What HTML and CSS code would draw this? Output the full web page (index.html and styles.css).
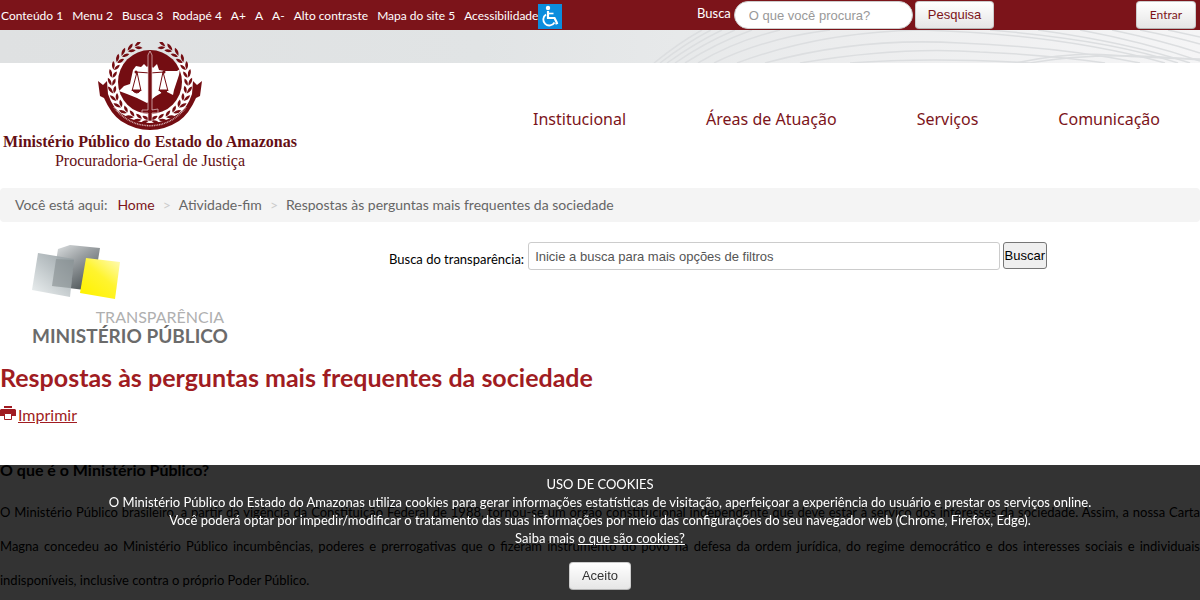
FILE: index.html
```html
<!DOCTYPE html>
<html lang="pt-br">
<head>
  <meta charset="UTF-8" />
  <meta name="viewport" content="width=device-width, initial-scale=1.0" />
  <title>Respostas às perguntas mais frequentes da sociedade</title>
  <link rel="stylesheet" href="styles.css">
</head>
<body>
  <div class="topbar">
    <nav class="access-links">
      <a href="#content">Conteúdo 1</a>
      <a href="#menu">Menu 2</a>
      <a href="#busca">Busca 3</a>
      <a href="#rodape">Rodapé 4</a>
      <a href="#">A+</a>
      <a href="#">A</a>
      <a href="#">A-</a>
      <a href="#">Alto contraste</a>
      <a href="#">Mapa do site 5</a>
      <a href="#" class="access-page">Acessibilidade<svg class="wheelchair" viewBox="0 0 24 25" aria-hidden="true">
        <rect width="24" height="25" fill="#0c8ddd"/>
        <circle cx="10" cy="4" r="2.2" fill="#fff"/>
        <path d="M10 7v7h6.500l2.500 5" fill="none" stroke="#fff" stroke-width="2.200"/>
        <path d="M10 9.500h5.500" stroke="#fff" stroke-width="1.600"/>
        <path d="M8 10.500a6 6 0 1 0 8.500 8" fill="none" stroke="#fff" stroke-width="1.800"/>
        <path d="M17.500 20l2.500-1" stroke="#fff" stroke-width="1.500"/>
      </svg></a>
    </nav>
    <form class="site-search">
      <label for="busca">Busca</label>
      <input type="text" id="busca" placeholder="O que você procura?">
      <button type="button" class="btn btn-red">Pesquisa</button>
    </form>
    <button type="button" class="btn btn-red btn-login">Entrar</button>
  </div>

  <header class="header">
    <svg class="band" viewBox="0 0 1200 33" preserveAspectRatio="none" aria-hidden="true">
      <defs>
        <linearGradient id="bandFill">
          <stop offset="0" stop-color="#dfe1e2"/>
          <stop offset="0.400" stop-color="#e1e4e5"/>
          <stop offset="0.700" stop-color="#ecedee"/>
          <stop offset="1" stop-color="#f5f5f6"/>
        </linearGradient>
      </defs>
      <rect width="1200" height="33" fill="url(#bandFill)"/>
      <g fill="none" stroke="#dcdee0" stroke-width="1.500">
        <path d="M654 33Q680 12 702 0"/>
        <path d="M660 33Q686 13 711 0"/>
        <path d="M667 33Q695 13 722 0"/>
        <path d="M675 33Q704 13 735 0"/>
        <path d="M685 33Q716 13 752 0"/>
        <path d="M698 33Q735 11 780 0"/>
        <path d="M714 33Q765 8 830 0"/>
        <path d="M737 33Q820 2 920 0Q1060 4 1165 33"/>
        <path d="M765 33Q860 7 960 13Q1060 17 1140 33"/>
        <path d="M800 33Q900 16 980 22Q1050 25 1105 33"/>
        <path d="M850 33Q930 27 1030 33"/>
        <path d="M990 0Q1110 10 1178 33"/>
        <path d="M1038 0Q1130 13 1190 33"/>
        <path d="M1080 0Q1145 12 1200 31"/>
        <path d="M1112 0Q1160 10 1200 23"/>
        <path d="M1140 0Q1175 7 1200 14"/>
        <path d="M1168 0L1200 7"/>
        <path d="M1015 33Q1070 22 1110 25T1200 29"/>
        <path d="M1030 33Q1100 20 1200 30"/>
      </g>
    </svg>
    <a href="#" class="brand">
      <svg class="emblem" viewBox="-54 -40 108 90" aria-hidden="true">
        <defs>
          <g id="leaf">
            <path d="M3-38.500Q0-43-5-42Q-3-38 3-38.500z"/>
            <path d="M3-37.800Q-2-38.500-4-34.500Q1-33.500 3-37.800z"/>
          </g>
          <g id="branch">
            <use href="#leaf" transform="rotate(19)"/>
            <use href="#leaf" transform="rotate(31)"/>
            <use href="#leaf" transform="rotate(43)"/>
            <use href="#leaf" transform="rotate(55)"/>
            <use href="#leaf" transform="rotate(67)"/>
            <use href="#leaf" transform="rotate(79)"/>
            <use href="#leaf" transform="rotate(91)"/>
            <use href="#leaf" transform="rotate(103)"/>
            <use href="#leaf" transform="rotate(115)"/>
            <use href="#leaf" transform="rotate(127)"/>
            <use href="#leaf" transform="rotate(139)"/>
            <use href="#leaf" transform="rotate(151)"/>
            <use href="#leaf" transform="rotate(163)"/>
            <use href="#leaf" transform="rotate(174)"/>
          </g>
        </defs>
        <g fill="#740d12">
          <path d="M-52-1L-47 3L-43-1L-42 12Q-37 27-28 32Q-14 41 0 41Q14 41 28 32Q37 27 42 12L43-1L47 3L52-1L50 14L46 16Q39 32 29 39Q15 48 0 48Q-15 48-29 39Q-39 32-46 16L-50 14z"/>
          <use href="#branch"/>
          <use href="#branch" transform="scale(-1 1)"/>
          <circle r="32"/>
        </g>
        <path d="M-36 25A44 44 0 0 0 36 25" fill="none" stroke="#d9b0b2" stroke-width="1.500" stroke-dasharray="1 .7"/>
        <path d="M-31 9L-26 4L-20 2L-17-12L-14-16L-9-15L-6-18L-3-15L0-18L3-14L7-18L9-12L15-11H27L30-13L29-7L24 8L23 13L15 9L6 14L-3 21L-13 16L-23 12z" fill="#fff"/>
        <g fill="none" stroke="#740d12" stroke-width="1">
          <path d="M-14-10Q0-8 14-10M-13-10L-18 9M-13-10L-9 9M13-10L9 9M13-10L18 9"/>
          <path d="M-18 8H-9Q-13 14-18 8zM9 8H18Q13 14 9 8z" fill="#740d12"/>
        </g>
        <circle cx="-14" cy="-10" r="1.500" fill="#740d12"/>
        <circle cx="14" cy="-10" r="1.500" fill="#740d12"/>
        <path d="M0-31L2-27V28L8 27V31L2 31V39H-2V31H-8V28H-2V-27z" fill="#740d12" stroke="#e8d0d1" stroke-width=".7"/>
      </svg>
      <span class="brand-name">Ministério Público do Estado do Amazonas</span>
      <span class="brand-sub">Procuradoria-Geral de Justiça</span>
    </a>
    <nav class="main-menu" id="menu">
      <a href="#">Institucional</a>
      <a href="#">Áreas de Atuação</a>
      <a href="#">Serviços</a>
      <a href="#">Comunicação</a>
    </nav>
  </header>

  <ul class="breadcrumb">
    <li>Você está aqui:</li>
    <li><a href="#">Home</a></li>
    <li class="divider">&gt;</li>
    <li>Atividade-fim</li>
    <li class="divider">&gt;</li>
    <li>Respostas às perguntas mais frequentes da sociedade</li>
  </ul>

  <div class="transparency">
    <a href="#" class="transparency-logo">
      <svg class="squares" viewBox="0 0 90 58" aria-hidden="true">
        <defs>
          <linearGradient id="dark" x1="0" y1="0" x2="0.700" y2="1">
            <stop offset="0" stop-color="#e3e6e7"/>
            <stop offset="0.450" stop-color="#9a9fa2"/>
            <stop offset="1" stop-color="#4b5356"/>
          </linearGradient>
          <linearGradient id="light" x1="1" y1="0" x2="0.200" y2="1">
            <stop offset="0" stop-color="#8d979b"/>
            <stop offset="0.500" stop-color="#b6bec1"/>
            <stop offset="1" stop-color="#e3e8e9"/>
          </linearGradient>
          <linearGradient id="yellow" x1="0.200" y1="1" x2="1" y2="0">
            <stop offset="0" stop-color="#fff200"/>
            <stop offset="0.500" stop-color="#fff42f"/>
            <stop offset="1" stop-color="#fffbc0"/>
          </linearGradient>
        </defs>
        <path d="M38 0L68 3L61 46L20 41L26 4z" fill="url(#dark)"/>
        <path d="M6 8L42 14L38 52L0 45z" fill="url(#light)" opacity="0.900"/>
        <path d="M24 14L42 15L39 43L20 41z" fill="#81898c" opacity="0.500"/>
        <path d="M54 13L88 17L83 54L48 48z" fill="url(#yellow)"/>
      </svg>
      <span class="transparency-word">TRANSPARÊNCIA</span>
      <span class="transparency-org">MINISTÉRIO PÚBLICO</span>
    </a>
    <form class="transparency-search">
      <label for="filtro">Busca do transparência:</label>
      <input type="text" id="filtro" placeholder="Inicie a busca para mais opções de filtros">
      <button type="button" class="btn-plain">Buscar</button>
    </form>
  </div>

  <main class="content" id="content">
    <h1>Respostas às perguntas mais frequentes da sociedade</h1>
    <a href="#" class="print">
      <svg class="printer" viewBox="0 0 16 16" aria-hidden="true">
        <path d="M4 1h8v2H4zM1 4h14l1 1v6h-3V9H3v2H0V5z" fill="#a01c22"/>
        <path d="M3 8h10v3H3z" fill="#a01c22"/>
        <path d="M4.500 8.500h7v6h-7z" fill="#fff" stroke="#a01c22"/>
      </svg><span>Imprimir</span>
    </a>
    <h2>O que é o Ministério Público?</h2>
    <p>O Ministério Público brasileiro, a partir da vigência da Constituição Federal de 1988, tornou-se um órgão constitucional independente que deve estar à serviço dos interesses da sociedade. Assim, a nossa Carta Magna concedeu ao Ministério Público incumbências, poderes e prerrogativas que o fizeram instrumento do povo na defesa da ordem jurídica, do regime democrático e dos interesses sociais e individuais indisponíveis, inclusive contra o próprio Poder Público.</p>
  </main>

  <div class="cookies">
    <div>USO DE COOKIES</div>
    <div>O Ministério Público do Estado do Amazonas utiliza cookies para gerar informações estatísticas de visitação, aperfeiçoar a experiência do usuário e prestar os serviços online.</div>
    <div>Você poderá optar por impedir/modificar o tratamento das suas informações por meio das configurações do seu navegador web (Chrome, Firefox, Edge).</div>
    <div>Saiba mais <a href="#">o que são cookies?</a></div>
    <button type="button" class="btn">Aceito</button>
  </div>
</body>
</html>
```
FILE: styles.css
```css
* {
  box-sizing: border-box;
}
body {
  margin: 0;
  font-family: Lato, sans-serif;
  font-size: 13px;
  line-height: 18px;
  color: #000;
  background: #fff;
}
a {
  color: #7c141a;
  text-decoration: none;
}
input, button {
  font-family: "Liberation Sans", Arial, sans-serif;
  font-size: 13px;
  line-height: 18px;
}

/* top bar */
.topbar {
  display: grid;
  grid-template-columns: 697px 1fr auto;
  height: 30px;
  padding-right: 4px;
  background: #7c141a;
  color: #fff;
}
.access-links {
  display: flex;
  align-items: center;
  gap: 9px;
  padding: 2px 0 0 1px;
  font-size: 12px;
}
.access-links a {
  color: #fff;
  white-space: nowrap;
}
.access-links .access-page {
  display: flex;
  align-items: center;
}
.wheelchair {
  width: 24px;
  height: 25px;
}
.site-search {
  display: flex;
  align-items: flex-start;
  padding-top: 1px;
}
.site-search label {
  padding: 3px 3px 0 0;
}
.site-search input {
  width: 179px;
  height: 28px;
  margin-right: 2px;
  padding: 4px 14px;
  border: 1px solid #ccc;
  border-radius: 14px;
}
input::placeholder {
  color: #999;
}
.btn {
  height: 28px;
  padding: 4px 12px;
  border: 1px solid #ccc;
  border-bottom-color: #b3b3b3;
  border-radius: 4px;
  background: linear-gradient(#fff, #e6e6e6);
  color: #333;
  cursor: pointer;
}
.btn-red {
  color: #7c141a;
}
.btn-login {
  min-width: 60px;
  margin-top: 1px;
  font-family: Lato, sans-serif;
  font-size: 12px;
}

/* header */
.header {
  position: relative;
  display: flex;
  justify-content: space-between;
  height: 158px;
}
.band {
  position: absolute;
  top: 0;
  left: 0;
  width: 100%;
  height: 33px;
}
.brand {
  position: relative;
  display: flex;
  flex-direction: column;
  align-items: center;
  width: 300px;
  padding-top: 12px;
  color: #640f14;
  font-family: "Liberation Serif", serif;
  font-size: 16px;
  white-space: nowrap;
}
.emblem {
  width: 108px;
  height: 90px;
}
.brand-name {
  font-weight: bold;
  line-height: 20px;
}
.brand-sub {
  line-height: 18px;
}
.main-menu {
  display: flex;
  gap: 80px;
  padding: 80px 40px 0 0;
  font-family: "Noto Sans", sans-serif;
  font-size: 16px;
}

/* breadcrumb */
.breadcrumb {
  display: flex;
  margin: 0;
  padding: 8px 15px;
  border-radius: 4px;
  background: #f4f4f4;
  color: #666;
  font-size: 14px;
  list-style: none;
}
.breadcrumb li:first-child {
  margin-right: 10px;
}
.breadcrumb .divider {
  padding: 0 8px;
  color: #ccc;
}

/* transparency search */
.transparency {
  display: flex;
  padding: 20px 0 0 32px;
}
.transparency-logo {
  display: flex;
  flex-direction: column;
  width: 196px;
  margin-right: 161px;
  padding-top: 3px;
  line-height: 19px;
  white-space: nowrap;
}
.squares {
  width: 90px;
  height: 58px;
}
.transparency-word {
  align-self: flex-end;
  padding: 4px 4px 0 0;
  color: #b0b0b0;
  font-size: 16px;
}
.transparency-org {
  color: #6b6b6b;
  font-size: 19px;
  font-weight: bold;
}
.transparency-search {
  display: flex;
  flex: 1;
  align-items: flex-start;
  margin-right: 153px;
}
.transparency-search label {
  padding: 8px 4px 0 0;
}
.transparency-search input {
  flex: 1;
  height: 28px;
  margin-right: 3px;
  padding: 4px 6px;
  border: 1px solid #ccc;
  border-radius: 3px;
}
.transparency-search input::placeholder {
  color: #555;
}
.btn-plain {
  height: 27px;
  padding: 1px;
  border: 1px solid #767676;
  border-radius: 3px;
  background: #efefef;
  color: #000;
}

/* content */
.content h1 {
  margin: 18px 0 14px;
  color: #a01c22;
  font-size: 25px;
  line-height: 28px;
}
.print {
  display: flex;
  gap: 2px;
  color: #a01c22;
  font-size: 16px;
  line-height: 20px;
}
.print span {
  text-decoration: underline;
}
.printer {
  width: 16px;
  height: 16px;
}
.content h2 {
  margin: 35px 0 15px;
  font-size: 16px;
  line-height: 20px;
}
.content p {
  margin: 0;
  line-height: 34px;
  text-align: justify;
}

/* cookie notice */
.cookies {
  position: fixed;
  right: 0;
  bottom: 0;
  left: 0;
  padding: 10px;
  background: rgba(0, 0, 0, 0.8);
  color: #fff;
  text-align: center;
}
.cookies a {
  color: #fff;
  text-decoration: underline;
}
.cookies .btn {
  display: block;
  margin: 15px auto 0;
}
```
